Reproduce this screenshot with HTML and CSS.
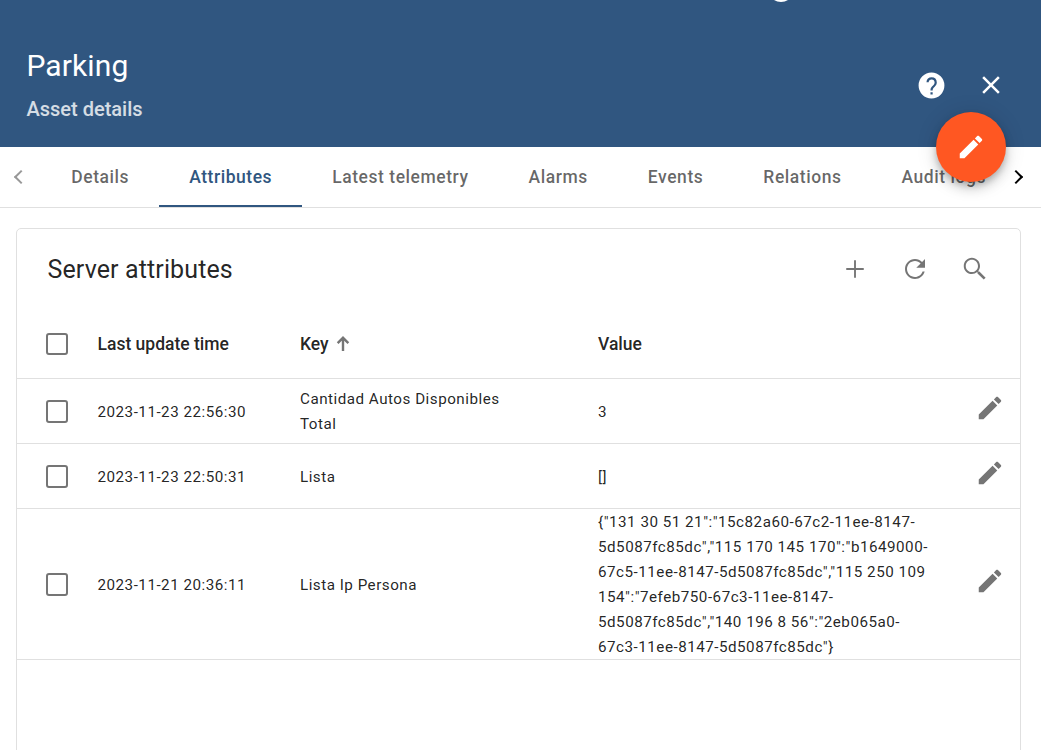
FILE: index.html
```
<!DOCTYPE html>
<html lang="en">
<head>
<meta charset="utf-8">
<title>Parking</title>
<link rel="stylesheet" href="styles.css">
</head>
<body>
<div class="page">
  <header class="header">
    <div class="heading">
      <h1 class="title">Parking</h1>
      <p class="subtitle">Asset details</p>
    </div>
    <div class="header-actions">
      <svg class="icon-help" viewBox="0 0 24 24"><path fill-rule="evenodd" d="M12 2a10 10 0 1 0 0 20a10 10 0 1 0 0-20zM11.200 17.200h1.700v1.700h-1.700zM11.200 15.800c0-3.500 3.200-3.700 3.200-6.100c0-1.500-.9-2.400-2.300-2.400c-1.300 0-2.200.8-2.300 2.100H8.100c.1-2.200 1.700-3.700 4-3.700c2.500 0 4 1.500 4 3.900c0 3.100-3.200 3.500-3.200 6.200z"/></svg>
      <svg class="icon" viewBox="0 0 24 24"><path d="M19 6.410L17.590 5 12 10.590 6.410 5 5 6.410 10.590 12 5 17.590 6.410 19 12 13.410 17.590 19 19 17.590 13.410 12z"/></svg>
    </div>
    <span class="top-dot"></span>
    <button class="fab"><svg class="icon" viewBox="0 0 24 24"><path d="M3 17.250V21h3.750L17.810 9.940l-3.750-3.750L3 17.250zM20.710 7.040c.39-.39.39-1.020 0-1.410l-2.340-2.340c-.39-.39-1.020-.39-1.410 0l-1.830 1.830 3.750 3.750 1.830-1.830z"/></svg></button>
  </header>
  <nav class="tabs">
    <span class="pager"><i class="chevron chevron-left"></i></span>
    <div class="tab-list">
      <a class="tab">Details</a>
      <a class="tab tab-active">Attributes</a>
      <a class="tab">Latest telemetry</a>
      <a class="tab">Alarms</a>
      <a class="tab">Events</a>
      <a class="tab">Relations</a>
      <a class="tab">Audit logs</a>
    </div>
    <span class="pager"><i class="chevron chevron-right"></i></span>
  </nav>
  <main class="card">
    <div class="toolbar">
      <h2 class="card-title">Server attributes</h2>
      <div class="tools">
        <svg class="icon" viewBox="0 0 24 24"><path d="M19 12.750h-6.250V19h-1.500v-6.250H5v-1.500h6.250V5h1.500v6.250H19z"/></svg>
        <svg class="icon" viewBox="0 0 24 24"><path d="M17.650 6.350C16.200 4.900 14.210 4 12 4c-4.420 0-7.990 3.580-7.990 8s3.570 8 7.990 8c3.730 0 6.840-2.550 7.730-6h-1.700c-.9 2.600-3.200 4.400-6.030 4.400-3.530 0-6.400-2.870-6.400-6.400s2.870-6.400 6.400-6.400c1.770 0 3.350.74 4.500 1.900L13 11h7V4l-2.350 2.350z"/></svg>
        <svg class="icon" viewBox="0 0 24 24"><path d="M15.500 14h-.79l-.28-.27C15.410 12.590 16 11.110 16 9.500 16 5.910 13.090 3 9.500 3S3 5.910 3 9.500 5.910 16 9.500 16c1.610 0 3.090-.59 4.230-1.570l.27.28v.79l5 4.990L20.490 19l-4.990-5zm-6 .4C6.790 14.400 4.600 12.210 4.600 9.500S6.790 4.600 9.500 4.600 14.400 6.790 14.400 9.500 12.210 14.400 9.500 14.400z"/></svg>
      </div>
    </div>
    <div class="row row-head">
      <span class="checkbox"></span>
      <div>Last update time</div>
      <div class="sorted">Key <svg class="arrow" viewBox="0 0 12 15"><path d="M6 0L12.200 6.200L10.500 8L7.200 4.700V15H4.800V4.700L1.500 8L-.2 6.200z"/></svg></div>
      <div>Value</div>
    </div>
    <div class="row">
      <span class="checkbox"></span>
      <div>2023-11-23 22:56:30</div>
      <div>Cantidad Autos Disponibles<br>Total</div>
      <div>3</div>
      <svg class="edit" viewBox="0 0 24 24"><path d="M3 17.250V21h3.750L17.810 9.940l-3.750-3.750L3 17.250zM20.710 7.040c.39-.39.39-1.020 0-1.410l-2.340-2.340c-.39-.39-1.020-.39-1.410 0l-1.830 1.830 3.750 3.750 1.830-1.830z"/></svg>
    </div>
    <div class="row">
      <span class="checkbox"></span>
      <div>2023-11-23 22:50:31</div>
      <div>Lista</div>
      <div>[]</div>
      <svg class="edit" viewBox="0 0 24 24"><path d="M3 17.250V21h3.750L17.810 9.940l-3.750-3.750L3 17.250zM20.710 7.040c.39-.39.39-1.020 0-1.410l-2.340-2.340c-.39-.39-1.020-.39-1.410 0l-1.830 1.830 3.750 3.750 1.830-1.830z"/></svg>
    </div>
    <div class="row">
      <span class="checkbox"></span>
      <div>2023-11-21 20:36:11</div>
      <div>Lista Ip Persona</div>
      <div>{"131 30 51 21":"15c82a60-67c2-11ee-8147-<br>5d5087fc85dc","115 170 145 170":"b1649000-<br>67c5-11ee-8147-5d5087fc85dc","115 250 109<br>154":"7efeb750-67c3-11ee-8147-<br>5d5087fc85dc","140 196 8 56":"2eb065a0-<br>67c3-11ee-8147-5d5087fc85dc"}</div>
      <svg class="edit" viewBox="0 0 24 24"><path d="M3 17.250V21h3.750L17.810 9.940l-3.750-3.750L3 17.250zM20.710 7.040c.39-.39.39-1.020 0-1.410l-2.340-2.340c-.39-.39-1.020-.39-1.410 0l-1.830 1.830 3.750 3.750 1.830-1.830z"/></svg>
    </div>
  </main>
</div>
</body>
</html>
```
FILE: styles.css
```
* { box-sizing: border-box; }
body { margin: 0; font-family: Roboto, sans-serif; color: rgba(0, 0, 0, .87); background: #fff; }
.page { height: 750px; overflow: hidden; display: flex; flex-direction: column; }
.header { position: relative; z-index: 1; flex: none; height: 147px; display: flex; justify-content: space-between; padding: 0 35px 0 26.500px; background: #305680; color: #fff; }
.heading { padding-top: 46px; }
.title { margin: 0; font-size: 30px; line-height: 40px; font-weight: 400; letter-spacing: .1px; }
.subtitle { margin: 0; padding-top: 8px; font-size: 20px; line-height: 30px; font-weight: 500; opacity: .8; }
.icon { width: 30px; height: 30px; fill: currentColor; display: block; }
.icon-help { width: 31px; height: 31px; fill: currentColor; }
.header-actions { display: flex; align-items: center; gap: 29.500px; height: 170px; }
.top-dot { position: absolute; left: 768px; top: -24px; width: 26px; height: 26px; border-radius: 50%; background: #fff; }
.fab { position: absolute; left: 936px; top: 112px; width: 70px; height: 70px; border: 0; padding: 0; border-radius: 50%; background: #ff5722; color: #fff; display: flex; align-items: center; justify-content: center; box-shadow: 0 4px 6px -1px rgba(0,0,0,.2), 0 7px 12px rgba(0,0,0,.14), 0 1px 22px rgba(0,0,0,.12); }
.tabs { flex: none; height: 61px; display: flex; border-bottom: 1px solid #e0e0e0; }
.pager { flex: none; width: 41px; display: flex; align-items: center; justify-content: center; }
.chevron { width: 10px; height: 10px; border: solid #000; border-width: 2px 2px 0 0; }
.chevron-left { transform: rotate(-135deg); opacity: .4; }
.chevron-right { transform: translateX(-5px) rotate(45deg); }
.tab-list { flex: 1; min-width: 0; overflow: hidden; display: flex; }
.tab { flex: none; padding: 0 29.700px 0 30.300px; font-size: 17.5px; line-height: 60px; font-weight: 500; letter-spacing: .55px; color: rgba(0,0,0,.6); white-space: nowrap; }
.tab-active { color: #305680; box-shadow: inset 0 -2px #305680; }
.card { flex: none; margin: 20px 20px 0 16px; height: 560px; border: 1px solid #e0e0e0; border-radius: 5px; }
.toolbar { height: 80px; display: flex; align-items: center; justify-content: space-between; padding: 0 30px 0 30.500px; }
.card-title { margin: 0; padding-top: 1px; font-size: 25px; font-weight: 400; letter-spacing: .12px; }
.tools { display: flex; gap: 30px; color: #757575; }
.row { display: grid; grid-template-columns: 51.500px 202.500px 298px 1fr 30px; align-items: center; height: 65px; padding: 1px 15.500px 0 29px; border-bottom: 1px solid #e0e0e0; font-size: 15.2px; line-height: 25px; letter-spacing: .5px; white-space: nowrap; }
.row > div { padding-top: 1px; }
.row:last-child { height: 151px; padding-top: 0; padding-bottom: 1px; }
.row-head { height: 70px; padding-top: 0; font-size: 17.5px; font-weight: 500; letter-spacing: 0; }
.checkbox { width: 22px; height: 22px; border: 2px solid #757575; border-radius: 3px; }
.row:not(.row-head) .checkbox { height: 23px; }
.sorted { display: flex; align-items: center; gap: 8.500px; }
.arrow { width: 12px; height: 15px; margin-bottom: 2px; fill: #757575; overflow: visible; }
.edit { width: 30px; height: 30px; fill: #757575; margin-bottom: 7px; }
```
